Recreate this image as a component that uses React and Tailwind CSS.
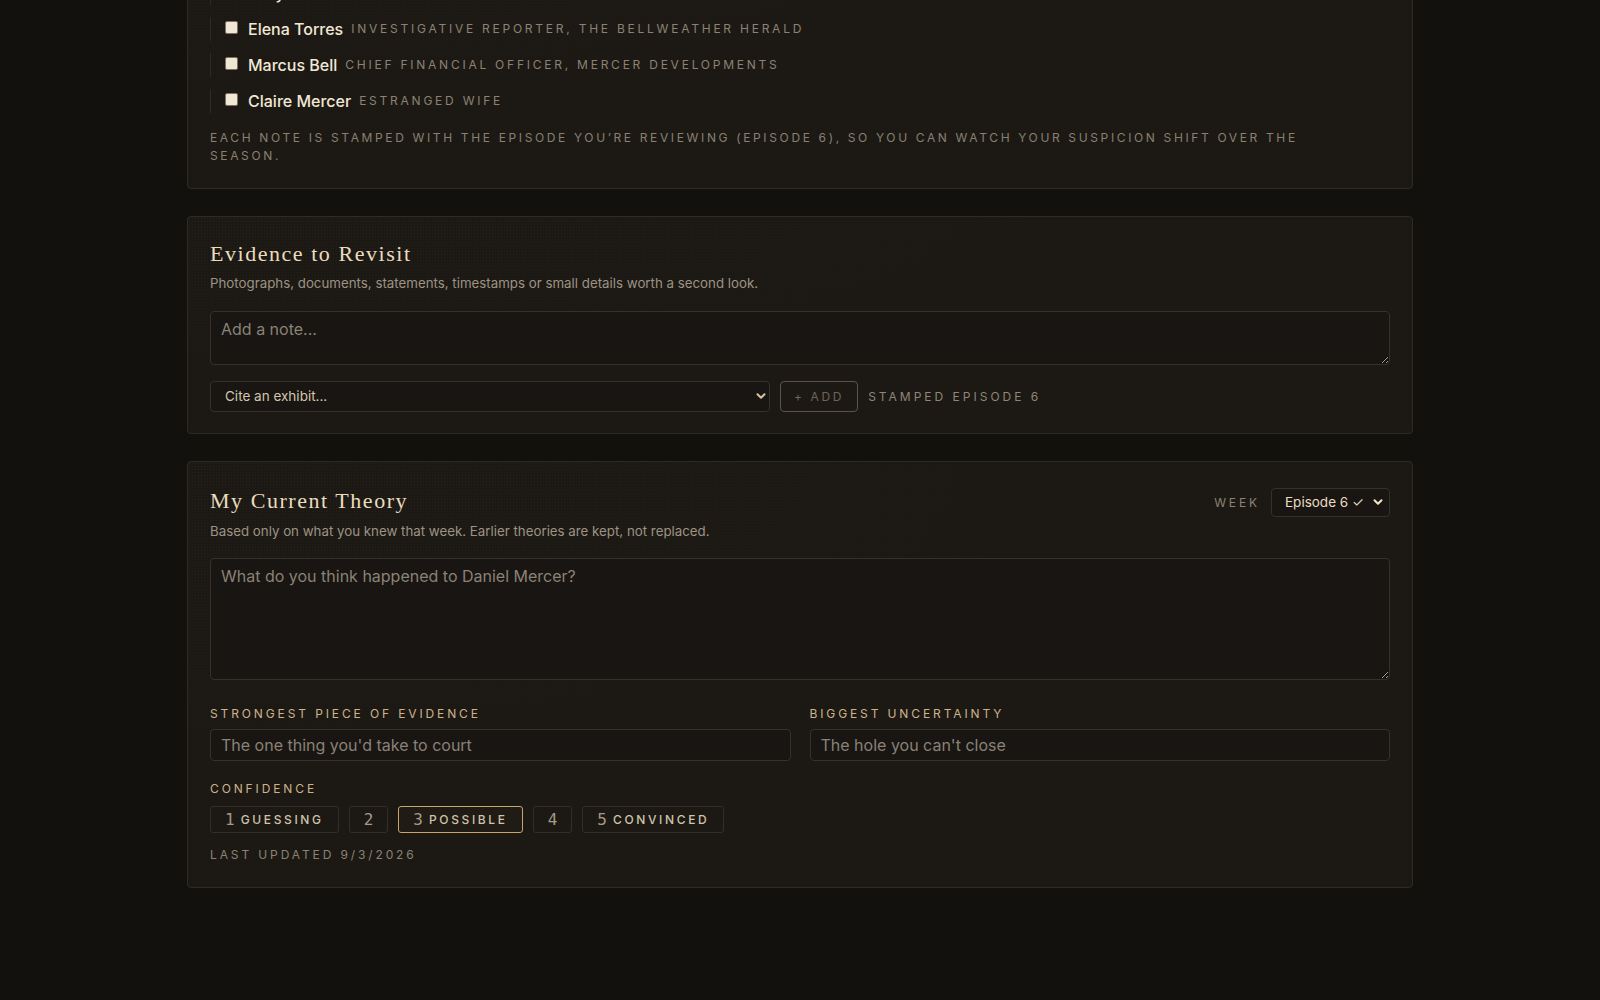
import React, { useState } from 'react';
import { ChevronDown } from 'lucide-react';

const SUSPECTS = [
  { name: 'Gary Holt', role: 'Site foreman' },
  { name: 'Elena Torres', role: 'Investigative reporter, The Bellweather Herald' },
  { name: 'Marcus Bell', role: 'Chief financial officer, Mercer Developments' },
  { name: 'Claire Mercer', role: 'Estranged wife' },
];

const CONFIDENCE = [
  { n: 1, label: 'Guessing' },
  { n: 2 },
  { n: 3, label: 'Possible' },
  { n: 4 },
  { n: 5, label: 'Convinced' },
];

const sans = "font-['Inter','Noto_Sans',sans-serif]";
const serif = "font-['Liberation_Serif','DejaVu_Serif',serif]";
const mono = "font-['DejaVu_Sans_Mono','Liberation_Mono',monospace]";

function Card({ children, className = '' }) {
  return (
    <section
      className={`relative rounded-[4px] border border-[#2f2a24] bg-[#1c1915] px-[22px] pt-[22px] ${className}`}
    >
      {/* faint paper grain in the top corner */}
      <div className="pointer-events-none absolute inset-0 rounded-[4px] bg-[radial-gradient(rgba(255,240,210,0.05)_1px,transparent_1px)] bg-[size:3px_3px] [mask-image:radial-gradient(ellipse_at_top_left,black,transparent_55%)]" />
      <div className="relative">{children}</div>
    </section>
  );
}

function Heading({ children }) {
  return (
    <h2 className={`${serif} text-[22px] leading-[30px] tracking-[0.07em] text-[#eadcbf]`}>
      {children}
    </h2>
  );
}

function Eyebrow({ children, className = '' }) {
  return (
    <div className={`text-[12px] leading-4 uppercase tracking-[0.24em] ${className}`}>{children}</div>
  );
}

export default function App() {
  const [confidence, setConfidence] = useState(3);

  return (
    <div className={`${sans} h-screen overflow-hidden bg-[#12110d]`}>
      <div className="mx-auto flex w-[1226px] flex-col gap-[27px] pb-24">
        <Card className="-mt-[116px] pb-[23px]">
          <Heading>Persons of Interest</Heading>
          <p className="mt-1 text-[13.3px] leading-5 text-[#9d9383]">
            Tick anyone you think could be involved.
          </p>
          <ul className="mt-5 flex flex-col gap-3">
            {SUSPECTS.map((s) => (
              <li key={s.name} className="flex h-6 items-center border-l border-[#2f2a24] pl-[14px]">
                <input
                  type="checkbox"
                  className="mr-[10px] -mt-[3px] h-[13px] w-[13px] appearance-none rounded-[2px] border border-[#7d725f] bg-[#f0e7d4]"
                />
                <span className="text-[16px] font-medium text-[#f2e8d5]">{s.name}</span>
                <span className="ml-[8px] text-[12px] uppercase tracking-[0.23em] text-[#8c8273]">{s.role}</span>
              </li>
            ))}
          </ul>
          <p className="mt-4 max-w-[1150px] text-[12px] leading-[18px] uppercase tracking-[0.22em] text-[#8a8071]">
            Each note is stamped with the episode you’re reviewing (Episode 6), so you can watch your suspicion shift over the season.
          </p>
        </Card>

        <Card className="pb-[21px]">
          <Heading>Evidence to Revisit</Heading>
          <p className="mt-1 text-[13.3px] leading-5 text-[#9d9383]">
            Photographs, documents, statements, timestamps or small details worth a second look.
          </p>
          <textarea
            placeholder="Add a note..."
            className="mt-[18px] block h-[54px] w-full rounded-[4px] border border-[#35302a] bg-[#181512] px-[10px] py-[5px] text-[16px] text-[#e8dcc4] placeholder:text-[#8a8276] outline-none"
          />
          <div className="mt-4 flex items-center gap-[10px]">
            <div className="relative w-[560px]">
              <select className="h-[31px] w-full appearance-none rounded-[4px] border border-[#35302a] bg-[#181512] pl-[14px] text-[13.5px] text-[#d3c6ab] outline-none">
                <option>Cite an exhibit...</option>
              </select>
              <ChevronDown
                size={14}
                strokeWidth={3.5}
                className="pointer-events-none absolute right-[2px] top-[8px] text-[#d6c49e]"
              />
            </div>
            <button
              disabled
              className="h-[31px] rounded-[4px] border border-[#5a5246] px-[13px] text-[12px] uppercase tracking-[0.22em] text-[#6c6457]"
            >
              + Add
            </button>
            <span className="text-[12px] uppercase tracking-[0.25em] text-[#8f8676]">Stamped Episode 6</span>
          </div>
        </Card>

        <Card className="pb-[24px]">
          <div className="flex items-center justify-between">
            <Heading>My Current Theory</Heading>
            <div className="flex items-center gap-[11px] pt-1">
              <Eyebrow className="text-[#8c8273]">Week</Eyebrow>
              <div className="relative">
                <select className="h-[29px] w-[119px] appearance-none rounded-[4px] border border-[#35302a] bg-[#181512] pl-[13px] text-[13.5px] text-[#eadcc0] outline-none">
                  <option>Episode 6 ✓</option>
                </select>
                <ChevronDown
                  size={14}
                  strokeWidth={3.5}
                  className="pointer-events-none absolute right-[5px] top-[7px] text-[#efe2c6]"
                />
              </div>
            </div>
          </div>
          <p className="mt-1 text-[13.3px] leading-5 text-[#9d9383]">
            Based only on what you knew that week. Earlier theories are kept, not replaced.
          </p>
          <textarea
            placeholder="What do you think happened to Daniel Mercer?"
            className="mt-[17px] block h-[122px] w-full rounded-[4px] border border-[#35302a] bg-[#181512] px-[10px] py-[5px] text-[16px] text-[#e8dcc4] placeholder:text-[#8a8276] outline-none"
          />
          <div className="mt-[26px] grid grid-cols-2 gap-x-[19px]">
            <label className="flex flex-col gap-[7px]">
              <Eyebrow className="text-[#ccb38a]">Strongest piece of evidence</Eyebrow>
              <input
                placeholder="The one thing you'd take to court"
                className="h-[32px] rounded-[4px] border border-[#35302a] bg-[#181512] px-[10px] text-[16px] text-[#e8dcc4] placeholder:text-[#8a8276] outline-none"
              />
            </label>
            <label className="flex flex-col gap-[7px]">
              <Eyebrow className="text-[#ccb38a]">Biggest uncertainty</Eyebrow>
              <input
                placeholder="The hole you can't close"
                className="h-[32px] rounded-[4px] border border-[#35302a] bg-[#181512] px-[10px] text-[16px] text-[#e8dcc4] placeholder:text-[#8a8276] outline-none"
              />
            </label>
          </div>
          <Eyebrow className="mt-5 text-[#ccb38a]">Confidence</Eyebrow>
          <div className="mt-[9px] flex gap-[10px]">
            {CONFIDENCE.map((c) => {
              const active = c.n === confidence;
              return (
                <button
                  key={c.n}
                  onClick={() => setConfidence(c.n)}
                  className={`flex h-[27px] items-center gap-[6px] rounded-[3px] border px-[14px] ${
                    active ? 'border-[#c6a66c] bg-[#201b15]' : 'border-[#332e27]'
                  }`}
                >
                  <span className={`${mono} text-[16px] font-light leading-none text-[#a59a86]`}>{c.n}</span>
                  {c.label && (
                    <span className="text-[12px] font-medium uppercase tracking-[0.22em] text-[#cfc3aa]">
                      {c.label}
                    </span>
                  )}
                </button>
              );
            })}
          </div>
          <Eyebrow className="mt-[14px] text-[#8c8273]">Last updated 9/3/2026</Eyebrow>
        </Card>
      </div>
    </div>
  );
}
